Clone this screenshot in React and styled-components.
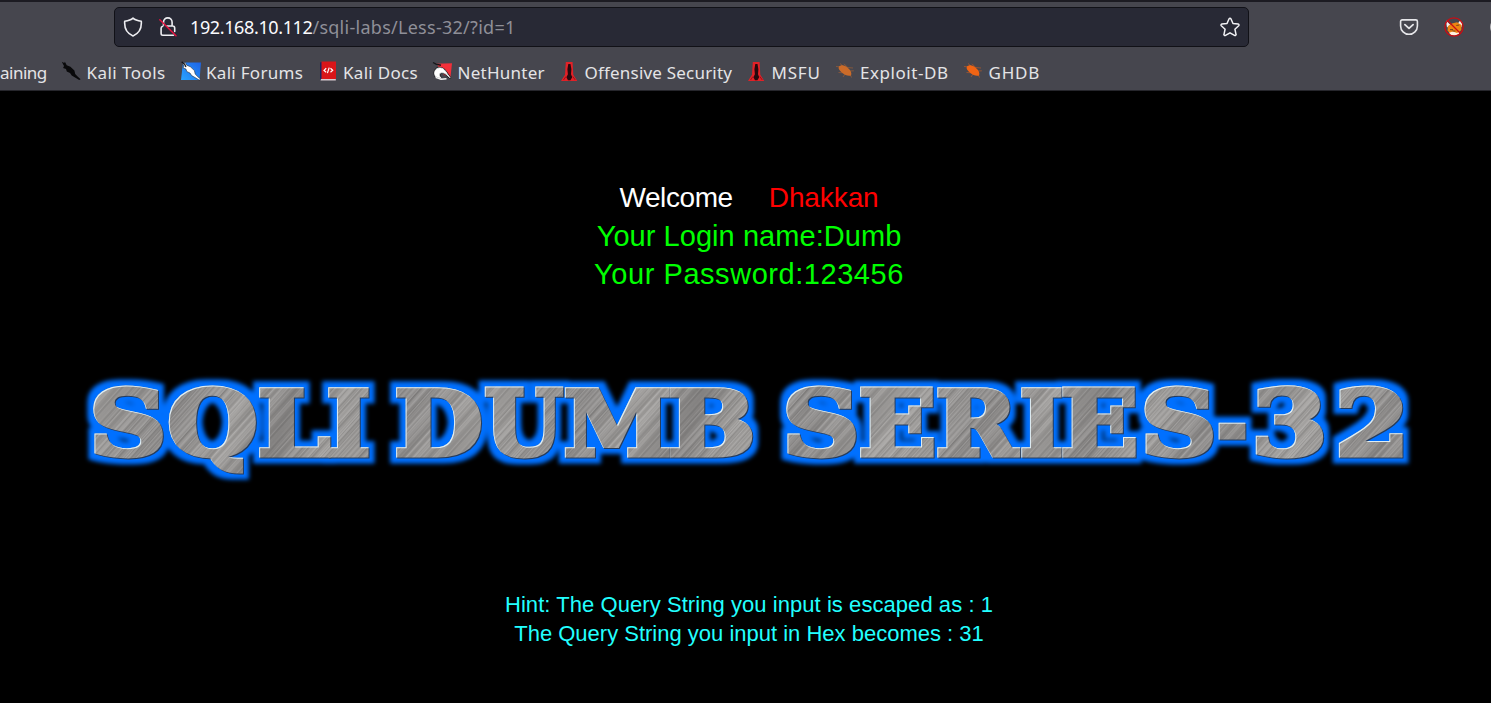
import React from 'react';
import styled, { createGlobalStyle } from 'styled-components';

const Global = createGlobalStyle`
  * { box-sizing: border-box; }
  html, body { margin: 0; background: #000; overflow: hidden; }
`;

const Window = styled.div`
  width: 1491px;
  height: 703px;
  overflow: hidden;
  background: #000;
  display: flex;
  flex-direction: column;
`;

const Chrome = styled.header`
  height: 91px;
  flex: none;
  background: #46464e;
  border-top: 2px solid #1c1b22;
  border-bottom: 1px solid #26262c;
  font-family: 'Noto Sans', 'Open Sans', sans-serif;
`;

const Toolbar = styled.div`
  height: 50px;
  display: flex;
  align-items: center;
  padding-left: 114px;
`;

const AddressBar = styled.div`
  width: 1135px;
  height: 40px;
  flex: none;
  display: flex;
  align-items: center;
  padding: 0 8px;
  border: 1px solid #111117;
  border-radius: 5px;
  background: #282935;
`;

const AddressIcons = styled.div`
  width: 67px;
  flex: none;
  display: flex;
  gap: 15px;
`;

const Url = styled.div`
  flex: 1;
  display: flex;
  font-size: 18px;
  line-height: 24px;
  white-space: pre;
`;

const Host = styled.span`
  color: #fbfbfe;
  letter-spacing: -0.38px;
`;

const Path = styled.span`
  color: #8f8f98;
  letter-spacing: 0.27px;
`;

const Extensions = styled.div`
  display: flex;
  flex: none;
  gap: 25px;
  margin-left: 150px;
`;

const Bookmarks = styled.nav`
  height: 38px;
  display: flex;
  align-items: center;
  padding-top: 3px;
`;

const Bookmark = styled.div`
  width: ${(p) => p.$width}px;
  flex: none;
  display: flex;
  align-items: center;
  gap: 5.5px;
  font-size: 17px;
  line-height: 24px;
  letter-spacing: ${(p) => p.$track}px;
  color: #e4e4e6;
  white-space: nowrap;
`;

const BookmarkLabel = styled.span`
  padding-top: 1px;
`;

const Icon = styled.svg`
  width: 20px;
  height: 20px;
  flex: none;
  display: block;
`;

const BookmarkIcon = styled(Icon)`
  margin-bottom: 3px;
`;

const Page = styled.main`
  flex: 1;
  display: flex;
  flex-direction: column;
  align-items: center;
  padding-top: 88px;
  padding-left: 7px;
  font-family: 'Liberation Sans', Arial, sans-serif;
`;

const Greeting = styled.section`
  display: flex;
  flex-direction: column;
  align-items: center;
  line-height: 38px;
`;

const WelcomeLine = styled.div`
  display: flex;
  gap: 36px;
  font-size: 28px;
  color: #fff;
  letter-spacing: -0.4px;
`;

const UserName = styled.span`
  color: #f00;
  letter-spacing: -0.1px;
`;

const Credential = styled.div`
  font-size: 29px;
  color: #0f0;
  letter-spacing: ${(p) => p.$track}px;
`;

const Banner = styled.svg`
  width: 1360px;
  height: 140px;
  display: block;
  flex: none;
  margin-top: 67px;
`;

const BannerText = styled.text`
  font-family: 'DejaVu Serif', serif;
  font-weight: bold;
  font-size: 89px;
  stroke-width: 5px;
  stroke-linejoin: miter;
  white-space: pre;
`;

const Hint = styled.section`
  margin-top: 90px;
  font-size: 22px;
  line-height: 29px;
  text-align: center;
  color: #2ff;
`;

const HintLine = styled.div`
  letter-spacing: ${(p) => p.$track || 0}px;
`;

/* advance, ink left and ink right of each glyph at 96px */
const GLYPHS = {
  S: [69.3, 5.5, 64], Q: [83.6, 4, 80], L: [67.5, 4, 65.5], I: [44.9, 4, 41],
  D: [83.3, 4, 79.5], U: [83.7, 2.5, 81.5], M: [106.3, 4, 102], B: [81.1, 4, 76],
  E: [73.2, 4, 69], R: [79.8, 4, 80.5], '-': [39.8, 5, 35], 3: [66.8, 5.5, 61], 2: [66.8, 6, 59],
};

/* letter with its left and right edge on the banner */
const LETTERS = [
  ['S', 94, 164], ['Q', 170, 257], ['L', 260, 331], ['I', 329, 370], [' '],
  ['D', 397, 482], ['U', 485, 564], ['M', 566, 670], ['B', 670, 753], [' '],
  ['S', 787, 857], ['E', 861, 935], ['R', 938, 1021], ['I', 1022, 1063], ['E', 1063, 1137],
  ['S', 1145, 1214], ['-', 1219, 1247], ['3', 1256, 1324], ['2', 1340, 1404],
];

const STRIPES = Array.from({ length: 160 }, (_, i) => {
  const v = Math.sin(i * 12.9898) * 43758.5453;
  const n = v - Math.floor(v);
  return { x: i * 0.9, light: n > 0.5, alpha: Math.abs(n - 0.5) * 0.38 };
});

function Letter({ ch, left, right }) {
  if (ch === ' ') return <tspan>{' '}</tspan>;
  const k = 89 / 96;
  const stroke = 5;
  const [adv, l, r] = GLYPHS[ch];
  const scale = (right - left - stroke) / ((r - l) * k);
  return (
    <tspan
      x={left + stroke / 2 - l * k * scale}
      textLength={adv * k * scale}
      lengthAdjust="spacingAndGlyphs"
    >
      {ch}
    </tspan>
  );
}

function SeriesBanner() {
  return (
    <Banner viewBox="70 360 1360 140">
      <defs>
        <linearGradient id="steel" gradientUnits="userSpaceOnUse" x1="24" y1="27" x2="200" y2="97" spreadMethod="reflect">
          <stop offset="0" stopColor="#a3a19f" />
          <stop offset="0.45" stopColor="#8b8988" />
          <stop offset="0.75" stopColor="#a09e9c" />
          <stop offset="1" stopColor="#898786" />
        </linearGradient>
        <pattern id="scratches" patternUnits="userSpaceOnUse" width="144" height="144" patternTransform="rotate(42)">
          {STRIPES.map((s) => (
            <rect key={s.x} x={s.x} y="0" width="0.9" height="144" fill={s.light ? '#fff' : '#222'} opacity={s.alpha} />
          ))}
        </pattern>
        <pattern id="brushed" patternUnits="userSpaceOnUse" x="70" y="360" width="1360" height="140">
          <rect x="0" y="0" width="1360" height="140" fill="url(#steel)" />
          <rect x="0" y="0" width="1360" height="140" fill="url(#scratches)" />
        </pattern>
        <filter id="glow" filterUnits="userSpaceOnUse" x="70" y="360" width="1360" height="140" colorInterpolationFilters="sRGB">
          <feMorphology in="SourceAlpha" operator="dilate" radius="6" result="fat" />
          <feGaussianBlur in="fat" stdDeviation="2.3" result="soft" />
          <feFlood floodColor="#0070ff" />
          <feComposite in2="soft" operator="in" result="halo" />
          <feOffset in="SourceAlpha" dx="0.8" dy="0.8" result="low" />
          <feFlood floodColor="#263c5c" />
          <feComposite in2="low" operator="in" result="shade" />
          <feOffset in="SourceAlpha" dx="1.1" dy="1.1" result="inner" />
          <feComposite in="SourceAlpha" in2="inner" operator="out" result="edge" />
          <feFlood floodColor="#e2f2f8" floodOpacity="0.95" />
          <feComposite in2="edge" operator="in" result="shine" />
          <feMerge>
            <feMergeNode in="halo" />
            <feMergeNode in="shade" />
            <feMergeNode in="SourceGraphic" />
            <feMergeNode in="shine" />
          </feMerge>
        </filter>
      </defs>
      <BannerText y="455" fill="url(#brushed)" stroke="url(#brushed)" filter="url(#glow)">
        {LETTERS.map(([ch, left, right], i) => (
          <Letter key={i} ch={ch} left={left} right={right} />
        ))}
      </BannerText>
    </Banner>
  );
}

const Shield = () => (
  <Icon viewBox="0 0 20 20" fill="none" stroke="#eeeef2" strokeWidth="1.6" strokeLinejoin="round">
    <path d="M10 1.1 C8 3 5 3.8 1.7 4.3 C1.2 11 3.6 16.3 10 18.9 C16.4 16.3 18.8 11 18.3 4.3 C15 3.8 12 3 10 1.1Z" />
  </Icon>
);

const InsecureLock = () => (
  <Icon viewBox="0 0 20 20" fill="none" stroke="#eeeef2" strokeWidth="1.6" strokeLinecap="round">
    <path d="M5.5 8V5.2a4.3 4.3 0 0 1 8.6 0V8.8M8.7 9h5.8a2.2 2.2 0 0 1 2.2 2.2v3.2M4.8 9.2a2 2 0 0 0-1.7 2v5.4a1.7 1.7 0 0 0 1.7 1.7H15.5" />
    <path d="M1.8 2.8 18 18.8" stroke="#e6123f" strokeWidth="1.5" />
  </Icon>
);

const Star = () => (
  <Icon viewBox="0 0 20 20" fill="none" stroke="#f2f2f5" strokeWidth="1.5" strokeLinejoin="round">
    <path d="M9.1 1.8a1 1 0 0 1 1.8 0l2.1 4.7 5.2.6a1 1 0 0 1 .5 1.7l-3.8 3.4 1.1 5.1a1 1 0 0 1-1.5 1.1L10 15.8l-4.5 2.6A1 1 0 0 1 4 17.3l1.1-5.1-3.8-3.4a1 1 0 0 1 .5-1.7L7 6.5z" />
  </Icon>
);

const Pocket = () => (
  <Icon viewBox="0 0 20 20" fill="none" stroke="#e6e6e9" strokeLinecap="round" strokeLinejoin="round">
    <path d="M3.2 2.9h13.6a1.6 1.6 0 0 1 1.6 1.6v4.4a8.4 8.4 0 0 1-16.8 0V4.5a1.6 1.6 0 0 1 1.6-1.6z" strokeWidth="1.6" />
    <path d="M5.9 7.6 10 11.4l4.1-3.8" strokeWidth="1.8" />
  </Icon>
);

const BlockedFox = () => (
  <Icon viewBox="0 0 20 20">
    <path d="M2 3.5 6.5 8 3 10.5zM16.5 3 18.5 6 17.5 10 13.5 7z" fill="#f4f0ee" />
    <path d="M4 9 8 6.5 13 5.2 17.5 8 17.3 13 13 17 7 17.2 3.5 13.5z" fill="#ee8411" />
    <path d="M5 15.8 9 14.5l4 1.5 2-1v2l-4 1.5-4-.5z" fill="#fff2df" />
    <path d="M6 12.6h3M12.3 8.5l3-.5M8.5 14h3" stroke="#7c441a" strokeWidth="1.1" />
    <circle cx="10" cy="10" r="9.1" fill="none" stroke="#c80d14" strokeWidth="1.3" />
    <path d="M3.5 3.5 16.5 16.5" stroke="#c80d14" strokeWidth="1.3" />
  </Icon>
);

const Avatar = () => (
  <Icon viewBox="0 0 20 20"><circle cx="10" cy="10" r="9" fill="#b5b5b8" /></Icon>
);

const dragonBlade = 'M.8.8 3.2 2 3.9.8 5.7 4.2 9.4 5.8 13.4 9.6 14.2 13 16.6 15.6 19.6 18.2 18.2 19.1 14.9 17 10.7 14.6 9 12 5.8 10.5 5 8.1 2.1 6.9 3 5.1z';

const ToolsIcon = () => (
  <BookmarkIcon viewBox="0 0 20 20"><path d={dragonBlade} fill="#09090b" /></BookmarkIcon>
);

const ForumsIcon = () => (
  <BookmarkIcon viewBox="0 0 20 20">
    <defs>
      <linearGradient id="forum" x1="1" y1="0" x2="0" y2="1">
        <stop stopColor="#1d63e6" /><stop offset="1" stopColor="#2aa4ff" />
      </linearGradient>
    </defs>
    <path d="M2 1.5h18l-1.5 17.5H0z" fill="url(#forum)" />
    <path d={dragonBlade} fill="#fff" stroke="#15151a" strokeWidth=".5" />
    <path d="M.8 1 3.6 3.2 5 6" stroke="#15151a" strokeWidth="1.2" fill="none" />
  </BookmarkIcon>
);

const DocsIcon = () => (
  <BookmarkIcon viewBox="0 0 20 20">
    <path d="M2 1.5 4 1v16.5L2 19z" fill="#1c245d" />
    <path d="M3.5 .5H18v17.5H3.5z" fill="#d91519" />
    <path d="M3 18h14.8v1.6H2.5z" fill="#d8c9cf" />
    <path d="M8.2 7.2 6 9.5l2.2 1.8M12.5 7.2l2.2 2-2.2 2.1M11.2 6.6l-1.8 5.5" fill="none" stroke="#fff" strokeWidth="1.2" />
  </BookmarkIcon>
);

const NetHunterIcon = () => (
  <BookmarkIcon viewBox="0 0 20 20">
    <path d="M4.5 2.7 20 2.2 18.5 16 12 14z" fill="#f3303a" />
    <path d="M1 1.5 4 3.2 9 4.3" fill="none" stroke="#17171a" strokeWidth="1.4" />
    <path d="M3.6 15.6C.6 10.4 4.6 5.6 9.6 7.2c4 1.2 4.8 5.4 8.6 9.6-3.2-2.2-5-5.4-8.4-5.2-3 .2-3.4 3.4-.4 5.6z" fill="#fff" stroke="#17171a" strokeWidth="2" strokeLinejoin="round" />
    <path d="M3.6 15.6C.6 10.4 4.6 5.6 9.6 7.2c4 1.2 4.8 5.4 8.6 9.6-3.2-2.2-5-5.4-8.4-5.2-3 .2-3.4 3.4-.4 5.6z" fill="#fff" stroke="#fff" strokeWidth=".8" />
    <path d="M3.6 16.4 9 18.2l5.5-.4" fill="none" stroke="#f5f5f5" strokeWidth="1.5" />
  </BookmarkIcon>
);

const TowerIcon = () => (
  <BookmarkIcon viewBox="0 0 20 20">
    <path d="M6.8 1h6.8l.7 12.7 4 6.3H2l4-6.3z" fill="#e12127" />
    <path d="M9.3 3h2.2l.9 5.2-.4 5.1 1.2 3-1.8 3H9l-1.6-3 1.5-3-.5-5.1z" fill="#25090d" />
    <path d="M7 15.5 4.5 19M13.8 15.5l2.5 3.5" stroke="#9d1118" strokeWidth="1" />
  </BookmarkIcon>
);

const BugIcon = ({ color }) => (
  <BookmarkIcon viewBox="0 0 20 20">
    <path d="M1 5.5 7 6M3.5 11.5l6 .3M5 2.5l4 3.5M9 2.8l4 4M12 6.5l6 .5M15 10l3.8-.2M10 13l-2 3M15 13l1.5 3.5" stroke={color} strokeWidth=".9" opacity=".5" />
    <path d="M3.8 5.8C6 3.2 10 4 13.2 7.2c2.8 2.3 3.8 5.2 2.8 7.2-2.8.8-6-.2-8.9-2.7-2.3-1.8-4.2-3.8-3.3-5.9z" fill={color} />
  </BookmarkIcon>
);

const BOOKMARKS = [
  { label: 'Kali Tools', icon: <ToolsIcon />, width: 119.5, track: 0.45 },
  { label: 'Kali Forums', icon: <ForumsIcon />, width: 137, track: 0.3 },
  { label: 'Kali Docs', icon: <DocsIcon />, width: 114.5, track: 0.3 },
  { label: 'NetHunter', icon: <NetHunterIcon />, width: 127, track: 0.25 },
  { label: 'Offensive Security', icon: <TowerIcon />, width: 187, track: 0.2 },
  { label: 'MSFU', icon: <TowerIcon />, width: 88.5, track: 0.8 },
  { label: 'Exploit-DB', icon: <BugIcon color="#cb6b29" />, width: 128.5, track: 0.55 },
  { label: 'GHDB', icon: <BugIcon color="#f06414" />, width: 90, track: 0.75 },
];

export default function App() {
  return (
    <Window>
      <Global />
      <Chrome>
        <Toolbar>
          <AddressBar>
            <AddressIcons><Shield /><InsecureLock /></AddressIcons>
            <Url><Host>192.168.10.112</Host><Path>/sqli-labs/Less-32/?id=1</Path></Url>
            <Star />
          </AddressBar>
          <Extensions><Pocket /><BlockedFox /><Avatar /></Extensions>
        </Toolbar>
        <Bookmarks>
          <Bookmark $width={61} $track={-0.5}><BookmarkLabel>aining</BookmarkLabel></Bookmark>
          {BOOKMARKS.map((b) => (
            <Bookmark key={b.label} $width={b.width} $track={b.track}>
              {b.icon}
              <BookmarkLabel>{b.label}</BookmarkLabel>
            </Bookmark>
          ))}
        </Bookmarks>
      </Chrome>
      <Page>
        <Greeting>
          <WelcomeLine>Welcome<UserName>Dhakkan</UserName></WelcomeLine>
          <Credential $track={0.05}>Your Login name:Dumb</Credential>
          <Credential $track={0.55}>Your Password:123456</Credential>
        </Greeting>
        <SeriesBanner />
        <Hint>
          <HintLine $track={0.06}>Hint: The Query String you input is escaped as : 1</HintLine>
          <HintLine>The Query String you input in Hex becomes : 31</HintLine>
        </Hint>
      </Page>
    </Window>
  );
}
